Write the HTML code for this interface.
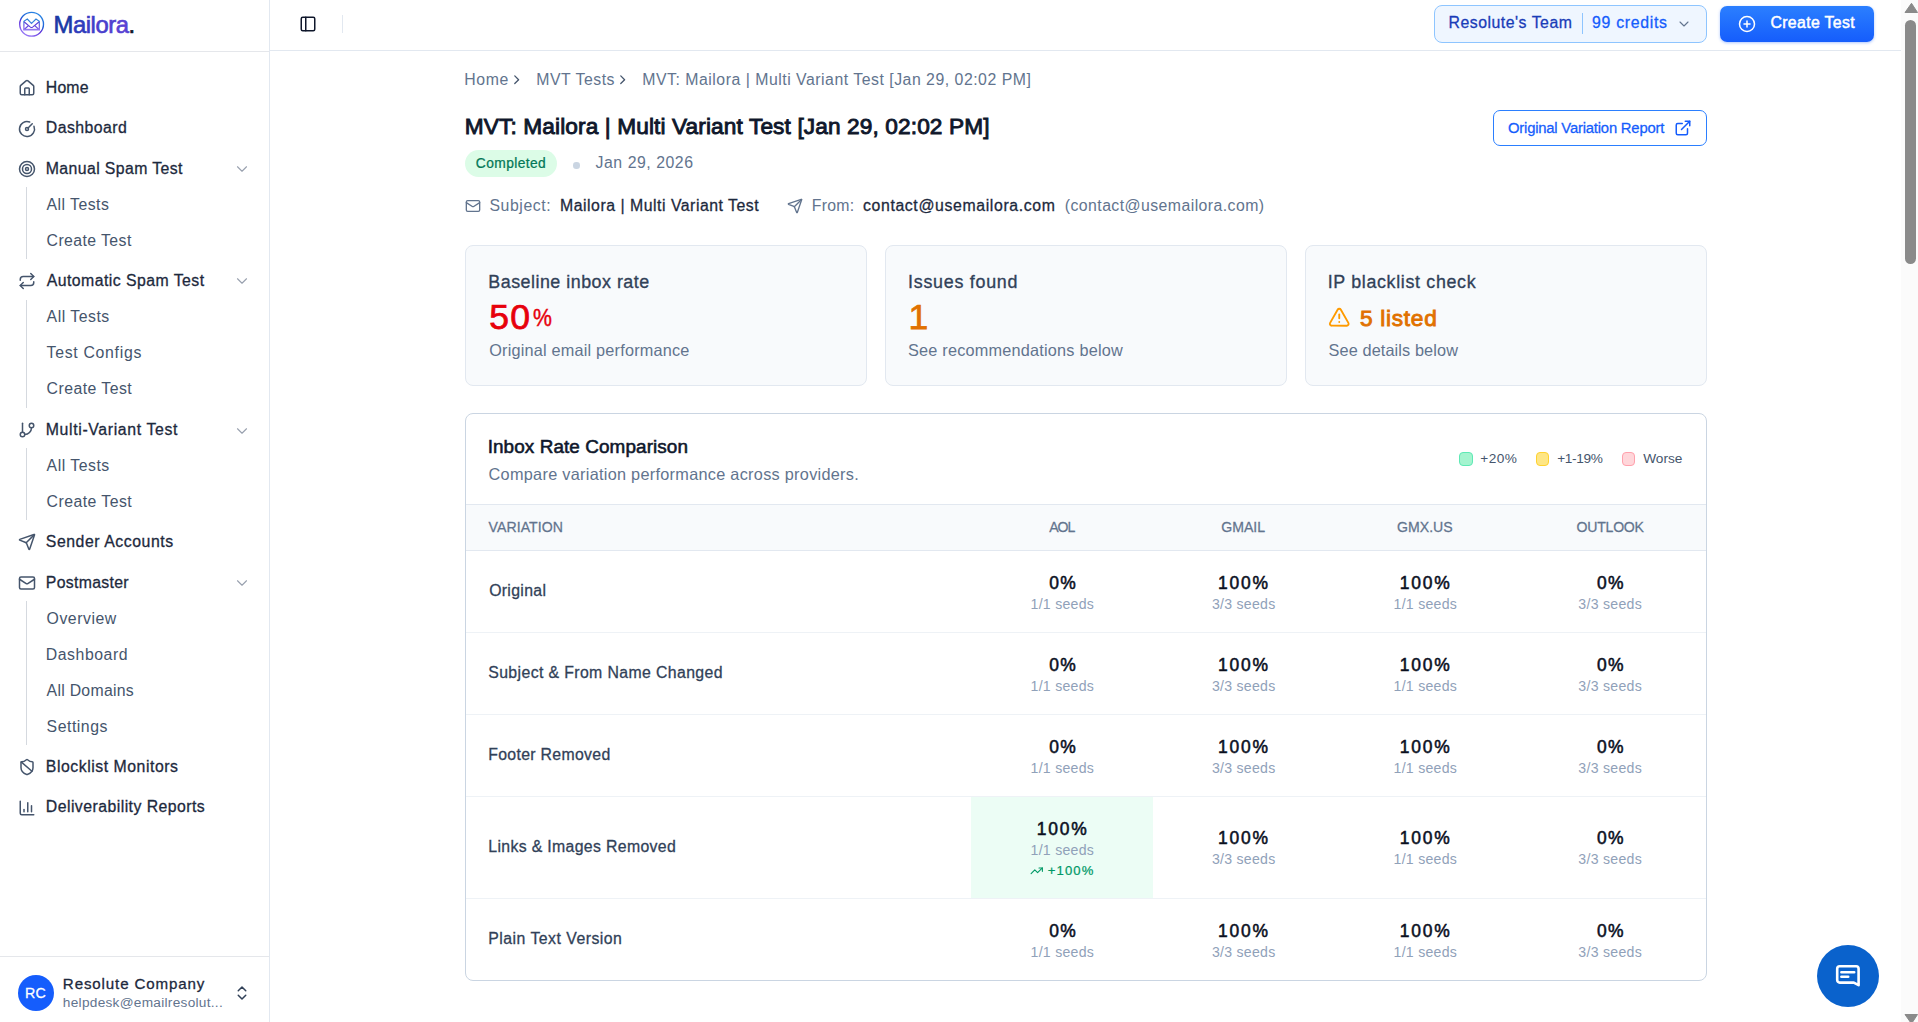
<!DOCTYPE html>
<html><head><meta charset="utf-8"><title>Mailora</title>
<style>
html,body{margin:0;padding:0;background:#fff;width:1918px;height:1022px;overflow:hidden;}
body{position:relative;font-family:"Liberation Sans",sans-serif;}
.t{position:absolute;white-space:nowrap;line-height:1;font-family:"Liberation Sans",sans-serif;}
.b{position:absolute;}
.ic{position:absolute;overflow:visible;}
</style></head><body>
<div class="b" style="left:269.00px;top:0.00px;width:1.00px;height:1022.00px;background:#e2e8f0"></div>
<div class="b" style="left:0.00px;top:51.00px;width:269.00px;height:1.00px;background:#e5e7eb"></div>
<div class="b" style="left:0.00px;top:956.00px;width:269.00px;height:1.00px;background:#e5e7eb"></div>
<div class="b" style="left:270.00px;top:50.00px;width:1631.00px;height:1.00px;background:#e2e8f0"></div>
<div class="b" style="left:342.00px;top:15.00px;width:1.00px;height:18.00px;background:#e2e8f0"></div>
<div class="b" style="left:26.00px;top:187.20px;width:1.00px;height:72.00px;background:#d5d9df"></div>
<div class="b" style="left:26.00px;top:299.60px;width:1.00px;height:108.00px;background:#d5d9df"></div>
<div class="b" style="left:26.00px;top:448.00px;width:1.00px;height:72.00px;background:#d5d9df"></div>
<div class="b" style="left:26.00px;top:601.00px;width:1.00px;height:144.00px;background:#d5d9df"></div>
<svg class="ic" style="left:16px;top:9px;width:32px;height:32px" viewBox="16 9 32 32">
<defs><linearGradient id="lg1" x1="0.8" y1="0" x2="0.3" y2="1"><stop offset="0" stop-color="#2b8be6"/><stop offset="0.45" stop-color="#1f5fd6"/><stop offset="0.6" stop-color="#5a2fd8"/><stop offset="1" stop-color="#9b7cf7"/></linearGradient>
<linearGradient id="lg2" x1="0" y1="0" x2="0" y2="1"><stop offset="0" stop-color="#2f7fd8"/><stop offset="0.35" stop-color="#3a86dc"/><stop offset="0.55" stop-color="#6a4fe0"/><stop offset="1" stop-color="#8a6cf0"/></linearGradient></defs>
<circle cx="31.6" cy="24.25" r="11.9" stroke="url(#lg1)" stroke-width="1.35" fill="none"/>
<g fill="none" stroke-width="1.15" stroke-linejoin="miter" stroke-linecap="round">
<path d="M23.9 29.6 V21.2 L27.3 19.1 L31.5 23.5 L36 19.1 L39.3 21.2 V29.6" stroke="url(#lg2)"/>
<path d="M24.3 22 L30.4 27.1 Q31.5 27.9 32.6 27.1 L38.9 22" stroke="#5b3fd8"/>
<path d="M24.5 29.2 L28.6 25.5 M38.6 29.2 L34.6 25.5" stroke="#6a4ae0"/>
</g>
<path d="M23.4 28.8 H39.9 V30.5 H23.4 Z" fill="#9479f0"/>
</svg>
<div class="t" id="logo" style="left:53.6px;top:12.77px;font-size:23.8px;font-weight:400;letter-spacing:-0.45px;-webkit-text-stroke:0.65px currentColor"><span style="color:#1b3aa6">M</span><span style="color:#2f3cbc">a</span><span style="color:#3b3cc4">i</span><span style="color:#423dc8">l</span><span style="color:#4a3ecd">o</span><span style="color:#5140d0">r</span><span style="color:#5842d3">a</span><span style="color:#0f172b">.</span></div>
<svg class="ic" style="left:18.00px;top:78.80px;width:18.00px;height:18.00px;" viewBox="0 0 24 24" fill="none" stroke="#45556c" stroke-width="2" stroke-linecap="round" stroke-linejoin="round"><path d="M15 21v-8a1 1 0 0 0-1-1h-4a1 1 0 0 0-1 1v8"/><path d="M3 10a2 2 0 0 1 .709-1.528l7-5.999a2 2 0 0 1 2.582 0l7 5.999A2 2 0 0 1 21 10v9a2 2 0 0 1-2 2H5a2 2 0 0 1-2-2z"/></svg>
<svg class="ic" style="left:18.00px;top:119.60px;width:18.00px;height:18.00px;" viewBox="0 0 24 24" fill="none" stroke="#45556c" stroke-width="2" stroke-linecap="round" stroke-linejoin="round"><path d="M15.6 2.7a10 10 0 1 0 5.7 5.7"/><circle cx="12" cy="12" r="2"/><path d="M13.4 10.6 19 5"/></svg>
<svg class="ic" style="left:18.00px;top:159.80px;width:18.00px;height:18.00px;" viewBox="0 0 24 24" fill="none" stroke="#45556c" stroke-width="2" stroke-linecap="round" stroke-linejoin="round"><circle cx="12" cy="12" r="10"/><circle cx="12" cy="12" r="6"/><circle cx="12" cy="12" r="2"/></svg>
<svg class="ic" style="left:18.00px;top:272.20px;width:18.00px;height:18.00px;" viewBox="0 0 24 24" fill="none" stroke="#45556c" stroke-width="2" stroke-linecap="round" stroke-linejoin="round"><path d="m17 2 4 4-4 4"/><path d="M3 11v-1a4 4 0 0 1 4-4h14"/><path d="m7 22-4-4 4-4"/><path d="M21 13v1a4 4 0 0 1-4 4H3"/></svg>
<svg class="ic" style="left:18.00px;top:421.30px;width:18.00px;height:18.00px;" viewBox="0 0 24 24" fill="none" stroke="#45556c" stroke-width="2" stroke-linecap="round" stroke-linejoin="round"><line x1="6" x2="6" y1="3" y2="15"/><circle cx="18" cy="6" r="3"/><circle cx="6" cy="18" r="3"/><path d="M18 9a9 9 0 0 1-9 9"/></svg>
<svg class="ic" style="left:18.00px;top:533.30px;width:18.00px;height:18.00px;" viewBox="0 0 24 24" fill="none" stroke="#45556c" stroke-width="2" stroke-linecap="round" stroke-linejoin="round"><path d="M14.536 21.686a.5.5 0 0 0 .937-.024l6.5-19a.496.496 0 0 0-.635-.635l-19 6.5a.5.5 0 0 0-.024.937l7.93 3.18a2 2 0 0 1 1.112 1.11z"/><path d="m21.854 2.147-10.94 10.939"/></svg>
<svg class="ic" style="left:18.00px;top:574.00px;width:18.00px;height:18.00px;" viewBox="0 0 24 24" fill="none" stroke="#45556c" stroke-width="2" stroke-linecap="round" stroke-linejoin="round"><rect width="20" height="16" x="2" y="4" rx="2"/><path d="m22 7-8.97 5.7a1.94 1.94 0 0 1-2.06 0L2 7"/></svg>
<svg class="ic" style="left:18.00px;top:757.90px;width:18.00px;height:18.00px;" viewBox="0 0 24 24" fill="none" stroke="#45556c" stroke-width="2" stroke-linecap="round" stroke-linejoin="round"><path d="M20 13c0 5-3.5 7.5-7.66 8.95a1 1 0 0 1-.67-.01C7.5 20.5 4 18 4 13V6a1 1 0 0 1 1-1c2 0 4.5-1.2 6.24-2.72a1.17 1.17 0 0 1 1.52 0C14.51 3.81 17 5 19 5a1 1 0 0 1 1 1z"/><path d="m4.243 5.21 14.39 12.472"/></svg>
<svg class="ic" style="left:18.00px;top:798.70px;width:18.00px;height:18.00px;" viewBox="0 0 24 24" fill="none" stroke="#45556c" stroke-width="2" stroke-linecap="round" stroke-linejoin="round"><path d="M3 3v16a2 2 0 0 0 2 2h16"/><path d="M18 17V9"/><path d="M13 17V5"/><path d="M8 17v-3"/></svg>
<svg class="ic" style="left:233.00px;top:160.00px;width:18.00px;height:18.00px;" viewBox="0 0 24 24" fill="none" stroke="#99a1af" stroke-width="1.5" stroke-linecap="round" stroke-linejoin="round"><path d="m6 9 6 6 6-6"/></svg>
<svg class="ic" style="left:233.00px;top:272.40px;width:18.00px;height:18.00px;" viewBox="0 0 24 24" fill="none" stroke="#99a1af" stroke-width="1.5" stroke-linecap="round" stroke-linejoin="round"><path d="m6 9 6 6 6-6"/></svg>
<svg class="ic" style="left:233.00px;top:421.60px;width:18.00px;height:18.00px;" viewBox="0 0 24 24" fill="none" stroke="#99a1af" stroke-width="1.5" stroke-linecap="round" stroke-linejoin="round"><path d="m6 9 6 6 6-6"/></svg>
<svg class="ic" style="left:233.00px;top:574.20px;width:18.00px;height:18.00px;" viewBox="0 0 24 24" fill="none" stroke="#99a1af" stroke-width="1.5" stroke-linecap="round" stroke-linejoin="round"><path d="m6 9 6 6 6-6"/></svg>
<div class="b" style="left:18.00px;top:975.00px;width:36.00px;height:36.00px;background:#155dfc;border-radius:50%"></div>
<svg class="ic" style="left:233.00px;top:984.20px;width:18.00px;height:18.00px;" viewBox="0 0 24 24" fill="none" stroke="#314158" stroke-width="2" stroke-linecap="round" stroke-linejoin="round"><path d="m7 15 5 5 5-5"/><path d="m7 9 5-5 5 5"/></svg>
<svg class="ic" style="left:299.00px;top:15.00px;width:18.00px;height:18.00px;" viewBox="0 0 24 24" fill="none" stroke="#0f172b" stroke-width="2" stroke-linecap="round" stroke-linejoin="round"><rect width="18" height="18" x="3" y="3" rx="2"/><path d="M9 3v18"/></svg>
<div class="b" style="left:1434.00px;top:5.00px;width:273.00px;height:38.00px;background:#eff6ff;border:1px solid #8ec5ff;border-radius:8px;box-sizing:border-box"></div>
<div class="b" style="left:1581.50px;top:13.00px;width:1.00px;height:21.00px;background:#8ec5ff"></div>
<svg class="ic" style="left:1675.80px;top:15.90px;width:16.00px;height:16.00px;" viewBox="0 0 24 24" fill="none" stroke="#62748e" stroke-width="1.6" stroke-linecap="round" stroke-linejoin="round"><path d="m6 9 6 6 6-6"/></svg>
<div class="b" style="left:1720.00px;top:6.00px;width:154.00px;height:36.00px;background:linear-gradient(180deg,#2b7fff,#155dfc);border-radius:7px;box-shadow:0 1px 3px rgba(21,93,252,0.35)"></div>
<svg class="ic" style="left:1738.10px;top:14.80px;width:18.00px;height:18.00px;" viewBox="0 0 24 24" fill="none" stroke="#ffffff" stroke-width="2" stroke-linecap="round" stroke-linejoin="round"><circle cx="12" cy="12" r="10"/><path d="M8 12h8"/><path d="M12 8v8"/></svg>
<svg class="ic" style="left:508.90px;top:72.10px;width:15.40px;height:15.40px;" viewBox="0 0 24 24" fill="none" stroke="#45556c" stroke-width="2" stroke-linecap="round" stroke-linejoin="round"><path d="m9 18 6-6-6-6"/></svg>
<svg class="ic" style="left:615.10px;top:72.10px;width:15.40px;height:15.40px;" viewBox="0 0 24 24" fill="none" stroke="#45556c" stroke-width="2" stroke-linecap="round" stroke-linejoin="round"><path d="m9 18 6-6-6-6"/></svg>
<div class="b" style="left:465.00px;top:150.00px;width:92.00px;height:27.00px;background:#dcfce7;border-radius:14px"></div>
<div class="b" style="left:573.00px;top:162.00px;width:6.50px;height:6.50px;background:#cad5e2;border-radius:50%"></div>
<svg class="ic" style="left:464.80px;top:197.80px;width:16.00px;height:16.00px;" viewBox="0 0 24 24" fill="none" stroke="#62748e" stroke-width="2" stroke-linecap="round" stroke-linejoin="round"><rect width="20" height="16" x="2" y="4" rx="2"/><path d="m22 7-8.97 5.7a1.94 1.94 0 0 1-2.06 0L2 7"/></svg>
<svg class="ic" style="left:787.20px;top:197.70px;width:16.00px;height:16.00px;" viewBox="0 0 24 24" fill="none" stroke="#62748e" stroke-width="2" stroke-linecap="round" stroke-linejoin="round"><path d="M14.536 21.686a.5.5 0 0 0 .937-.024l6.5-19a.496.496 0 0 0-.635-.635l-19 6.5a.5.5 0 0 0-.024.937l7.93 3.18a2 2 0 0 1 1.112 1.11z"/><path d="m21.854 2.147-10.94 10.939"/></svg>
<div class="b" style="left:1493.00px;top:110.00px;width:214.00px;height:36.00px;border:1px solid #2b7fff;border-radius:7px;box-sizing:border-box"></div>
<svg class="ic" style="left:1674.10px;top:118.50px;width:18.00px;height:18.00px;" viewBox="0 0 24 24" fill="none" stroke="#155dfc" stroke-width="2" stroke-linecap="round" stroke-linejoin="round"><path d="M15 3h6v6"/><path d="M10 14 21 3"/><path d="M18 13v6a2 2 0 0 1-2 2H5a2 2 0 0 1-2-2V8a2 2 0 0 1 2-2h6"/></svg>
<div class="b" style="left:465.00px;top:245.00px;width:402.00px;height:141.00px;background:#f8fafc;border:1px solid #e2e8f0;border-radius:8px;box-sizing:border-box"></div>
<div class="b" style="left:885.00px;top:245.00px;width:402.00px;height:141.00px;background:#f8fafc;border:1px solid #e2e8f0;border-radius:8px;box-sizing:border-box"></div>
<div class="b" style="left:1305.00px;top:245.00px;width:402.00px;height:141.00px;background:#f8fafc;border:1px solid #e2e8f0;border-radius:8px;box-sizing:border-box"></div>
<svg class="ic" style="left:1327.75px;top:305.95px;width:22.50px;height:22.50px;" viewBox="0 0 24 24" fill="none" stroke="#fe9a00" stroke-width="2" stroke-linecap="round" stroke-linejoin="round"><path d="m21.73 18-8-14a2 2 0 0 0-3.48 0l-8 14A2 2 0 0 0 4 21h16a2 2 0 0 0 1.73-3"/><path d="M12 9v4"/><path d="M12 17h.01"/></svg>
<div class="b" style="left:465.00px;top:413.00px;width:1242.00px;height:568.00px;background:#fff;border:1px solid #cad5e2;border-radius:8px;box-sizing:border-box"></div>
<div class="b" style="left:466.00px;top:504.00px;width:1240.00px;height:47.00px;background:#f8fafc;border-top:1px solid #e2e8f0;border-bottom:1px solid #e2e8f0;box-sizing:border-box"></div>
<div class="b" style="left:466.00px;top:632.00px;width:1240.00px;height:1.00px;background:#eef2f6"></div>
<div class="b" style="left:466.00px;top:714.00px;width:1240.00px;height:1.00px;background:#eef2f6"></div>
<div class="b" style="left:466.00px;top:796.00px;width:1240.00px;height:1.00px;background:#eef2f6"></div>
<div class="b" style="left:466.00px;top:898.00px;width:1240.00px;height:1.00px;background:#eef2f6"></div>
<div class="b" style="left:971.00px;top:797.00px;width:182.00px;height:101.00px;background:#ecfdf5"></div>
<div class="b" style="left:1459.00px;top:451.80px;width:13.60px;height:14.00px;background:#a4f4cf;border:1px solid #5ee9b5;border-radius:4px;box-sizing:border-box"></div>
<div class="b" style="left:1535.80px;top:451.80px;width:13.60px;height:14.00px;background:#fee685;border:1px solid #ffd230;border-radius:4px;box-sizing:border-box"></div>
<div class="b" style="left:1621.80px;top:451.80px;width:13.60px;height:14.00px;background:#ffd6da;border:1px solid #ffa1ad;border-radius:4px;box-sizing:border-box"></div>
<svg class="ic" style="left:1030.25px;top:863.55px;width:13.50px;height:13.50px;" viewBox="0 0 24 24" fill="none" stroke="#009966" stroke-width="2" stroke-linecap="round" stroke-linejoin="round"><polyline points="22 7 13.5 15.5 8.5 10.5 2 17"/><polyline points="16 7 22 7 22 13"/></svg>
<div class="b" style="left:1901.00px;top:0.00px;width:17.00px;height:1022.00px;background:#fbfbfb"></div>
<svg class="ic" style="left:1901px;top:0;width:17px;height:1022px" viewBox="0 0 17 1022"><path d="M4 12.5 L10.5 3.3 L16.5 12.5 Z" fill="#8a8a8a" stroke="#8a8a8a" stroke-width="1" stroke-linejoin="round"/><rect x="4" y="20" width="11" height="244" rx="5.5" fill="#8a8a8a"/><path d="M4 1014.5 L10.5 1023.7 L16.5 1014.5 Z" fill="#8a8a8a" stroke="#8a8a8a" stroke-width="1" stroke-linejoin="round"/></svg>
<div class="b" style="left:1817.00px;top:945.00px;width:62.00px;height:62.00px;background:#0a62cc;border-radius:50%"></div>
<svg class="ic" style="left:1832px;top:961px;width:32px;height:32px" viewBox="1832 961 32 32" fill="none" stroke="#fff" stroke-width="2.6" stroke-linecap="round" stroke-linejoin="round"><path d="M1839.7 966.3 H1856.1 A2.5 2.5 0 0 1 1858.6 968.8 V985.2 L1853.8 982.6 H1839.7 A2.5 2.5 0 0 1 1837.2 980.1 V968.8 A2.5 2.5 0 0 1 1839.7 966.3 Z"/><path d="M1841.4 972.3 H1854.2 M1841.4 976.7 H1848.2"/></svg>
<div class="t" id="nav0" style="left:45.80px;top:80.00px;font-size:15.84px;font-weight:400;color:#1d293d;letter-spacing:0.150px;-webkit-text-stroke:0.285px currentColor;">Home</div>
<div class="t" id="nav1" style="left:45.80px;top:120.00px;font-size:15.84px;font-weight:400;color:#1d293d;letter-spacing:0.450px;-webkit-text-stroke:0.285px currentColor;">Dashboard</div>
<div class="t" id="nav2" style="left:45.80px;top:161.00px;font-size:15.84px;font-weight:400;color:#1d293d;letter-spacing:0.390px;-webkit-text-stroke:0.285px currentColor;">Manual Spam Test</div>
<div class="t" id="nav3" style="left:46.70px;top:273.00px;font-size:15.84px;font-weight:400;color:#1d293d;letter-spacing:0.450px;-webkit-text-stroke:0.285px currentColor;">Automatic Spam Test</div>
<div class="t" id="nav4" style="left:45.80px;top:422.00px;font-size:15.84px;font-weight:400;color:#1d293d;letter-spacing:0.635px;-webkit-text-stroke:0.285px currentColor;">Multi-Variant Test</div>
<div class="t" id="nav5" style="left:45.80px;top:534.00px;font-size:15.84px;font-weight:400;color:#1d293d;letter-spacing:0.546px;-webkit-text-stroke:0.285px currentColor;">Sender Accounts</div>
<div class="t" id="nav6" style="left:45.80px;top:575.00px;font-size:15.84px;font-weight:400;color:#1d293d;letter-spacing:0.300px;-webkit-text-stroke:0.285px currentColor;">Postmaster</div>
<div class="t" id="nav7" style="left:45.80px;top:759.00px;font-size:15.84px;font-weight:400;color:#1d293d;letter-spacing:0.529px;-webkit-text-stroke:0.285px currentColor;">Blocklist Monitors</div>
<div class="t" id="nav8" style="left:45.80px;top:799.00px;font-size:15.84px;font-weight:400;color:#1d293d;letter-spacing:0.450px;-webkit-text-stroke:0.285px currentColor;">Deliverability Reports</div>
<div class="t" id="sub0" style="left:46.60px;top:197.00px;font-size:15.84px;font-weight:400;color:#45556c;letter-spacing:0.450px;">All Tests</div>
<div class="t" id="sub1" style="left:46.60px;top:233.00px;font-size:15.84px;font-weight:400;color:#45556c;letter-spacing:0.405px;">Create Test</div>
<div class="t" id="sub2" style="left:46.60px;top:309.00px;font-size:15.84px;font-weight:400;color:#45556c;letter-spacing:0.506px;">All Tests</div>
<div class="t" id="sub3" style="left:46.60px;top:345.00px;font-size:15.84px;font-weight:400;color:#45556c;letter-spacing:0.695px;">Test Configs</div>
<div class="t" id="sub4" style="left:46.60px;top:381.00px;font-size:15.84px;font-weight:400;color:#45556c;letter-spacing:0.450px;">Create Test</div>
<div class="t" id="sub5" style="left:46.60px;top:458.00px;font-size:15.84px;font-weight:400;color:#45556c;letter-spacing:0.506px;">All Tests</div>
<div class="t" id="sub6" style="left:46.60px;top:494.00px;font-size:15.84px;font-weight:400;color:#45556c;letter-spacing:0.450px;">Create Test</div>
<div class="t" id="sub7" style="left:46.60px;top:611.00px;font-size:15.84px;font-weight:400;color:#45556c;letter-spacing:0.514px;">Overview</div>
<div class="t" id="sub8" style="left:45.70px;top:647.00px;font-size:15.84px;font-weight:400;color:#45556c;letter-spacing:0.562px;">Dashboard</div>
<div class="t" id="sub9" style="left:46.60px;top:683.00px;font-size:15.84px;font-weight:400;color:#45556c;letter-spacing:0.270px;">All Domains</div>
<div class="t" id="sub10" style="left:46.60px;top:719.00px;font-size:15.84px;font-weight:400;color:#45556c;letter-spacing:0.514px;">Settings</div>
<div class="t" id="footname" style="left:62.85px;top:976.00px;font-size:15.12px;font-weight:400;color:#1d293d;letter-spacing:0.870px;-webkit-text-stroke:0.300px currentColor;">Resolute Company</div>
<div class="t" id="footmail" style="left:62.85px;top:996.00px;font-size:13.66px;font-weight:400;color:#62748e;letter-spacing:0.274px;">helpdesk@emailresolut...</div>
<div class="t" id="rc" style="left:24.90px;top:986.00px;font-size:14.24px;font-weight:400;color:#ffffff;letter-spacing:0.450px;-webkit-text-stroke:0.256px currentColor;">RC</div>
<div class="t" id="team" style="left:1448.50px;top:15.00px;font-size:15.84px;font-weight:400;color:#193cb8;letter-spacing:0.514px;-webkit-text-stroke:0.285px currentColor;">Resolute&#x27;s Team</div>
<div class="t" id="credits" style="left:1592.05px;top:15.00px;font-size:15.84px;font-weight:400;color:#155dfc;letter-spacing:0.700px;-webkit-text-stroke:0.285px currentColor;">99 credits</div>
<div class="t" id="createbtn" style="left:1770.40px;top:15.00px;font-size:15.84px;font-weight:400;color:#ffffff;letter-spacing:0.360px;-webkit-text-stroke:0.475px currentColor;">Create Test</div>
<div class="t" id="bc1" style="left:464.30px;top:72.00px;font-size:15.84px;font-weight:400;color:#62748e;letter-spacing:0.600px;">Home</div>
<div class="t" id="bc2" style="left:536.25px;top:72.00px;font-size:15.84px;font-weight:400;color:#62748e;letter-spacing:0.506px;">MVT Tests</div>
<div class="t" id="bc3" style="left:642.25px;top:72.00px;font-size:15.84px;font-weight:400;color:#62748e;letter-spacing:0.512px;">MVT: Mailora | Multi Variant Test [Jan 29, 02:02 PM]</div>
<div class="t" id="title" style="left:464.85px;top:115.00px;font-size:22.67px;font-weight:400;color:#0f172b;letter-spacing:0.115px;-webkit-text-stroke:0.907px currentColor;">MVT: Mailora | Multi Variant Test [Jan 29, 02:02 PM]</div>
<div class="t" id="completed" style="left:475.85px;top:157.00px;font-size:13.81px;font-weight:400;color:#047857;letter-spacing:0.394px;-webkit-text-stroke:0.249px currentColor;">Completed</div>
<div class="t" id="date" style="left:595.60px;top:155.00px;font-size:15.84px;font-weight:400;color:#62748e;letter-spacing:0.532px;">Jan 29, 2026</div>
<div class="t" id="subjlbl" style="left:489.45px;top:198.00px;font-size:15.84px;font-weight:400;color:#62748e;letter-spacing:0.579px;">Subject:</div>
<div class="t" id="subj" style="left:560.00px;top:198.00px;font-size:15.84px;font-weight:400;color:#1d293d;letter-spacing:0.517px;-webkit-text-stroke:0.285px currentColor;">Mailora | Multi Variant Test</div>
<div class="t" id="fromlbl" style="left:811.85px;top:198.00px;font-size:15.84px;font-weight:400;color:#62748e;letter-spacing:0.225px;">From:</div>
<div class="t" id="from" style="left:863.00px;top:198.00px;font-size:15.84px;font-weight:400;color:#1d293d;letter-spacing:0.621px;-webkit-text-stroke:0.285px currentColor;">contact@usemailora.com</div>
<div class="t" id="from2" style="left:1064.80px;top:198.00px;font-size:15.84px;font-weight:400;color:#62748e;letter-spacing:0.430px;">(contact@usemailora.com)</div>
<div class="t" id="ovr" style="left:1508.00px;top:121.00px;font-size:14.83px;font-weight:400;color:#155dfc;letter-spacing:-0.206px;-webkit-text-stroke:0.267px currentColor;">Original Variation Report</div>
<div class="t" id="c1t" style="left:488.30px;top:274.00px;font-size:17.88px;font-weight:400;color:#314158;letter-spacing:0.500px;-webkit-text-stroke:0.322px currentColor;">Baseline inbox rate</div>
<div class="t" id="c1v" style="left:489.25px;top:300.00px;font-size:35.47px;font-weight:400;color:#e7000b;letter-spacing:1.350px;-webkit-text-stroke:0.750px currentColor;">50</div>
<div class="t" id="c1p" style="left:533.00px;top:306.00px;font-size:24.13px;font-weight:400;color:#e7000b;letter-spacing:0.000px;-webkit-text-stroke:0.434px currentColor;transform:scaleX(0.88);transform-origin:0 0;">%</div>
<div class="t" id="c1s" style="left:489.20px;top:342.00px;font-size:16.28px;font-weight:400;color:#62748e;letter-spacing:0.198px;">Original email performance</div>
<div class="t" id="c2t" style="left:908.05px;top:274.00px;font-size:17.88px;font-weight:400;color:#314158;letter-spacing:0.736px;-webkit-text-stroke:0.322px currentColor;">Issues found</div>
<div class="t" id="c2v" style="left:908.40px;top:300.00px;font-size:35.47px;font-weight:400;color:#e17100;letter-spacing:0.000px;-webkit-text-stroke:0.750px currentColor;">1</div>
<div class="t" id="c2s" style="left:908.05px;top:342.00px;font-size:16.28px;font-weight:400;color:#62748e;letter-spacing:0.206px;">See recommendations below</div>
<div class="t" id="c3t" style="left:1327.70px;top:274.00px;font-size:17.88px;font-weight:400;color:#314158;letter-spacing:0.662px;-webkit-text-stroke:0.322px currentColor;">IP blacklist check</div>
<div class="t" id="c3v" style="left:1360.00px;top:307.00px;font-size:22.67px;font-weight:400;color:#e17100;letter-spacing:0.707px;-webkit-text-stroke:0.907px currentColor;">5 listed</div>
<div class="t" id="c3s" style="left:1328.60px;top:342.00px;font-size:16.28px;font-weight:400;color:#62748e;letter-spacing:0.113px;">See details below</div>
<div class="t" id="tt" style="left:487.70px;top:438.00px;font-size:18.90px;font-weight:400;color:#0f172b;letter-spacing:0.090px;-webkit-text-stroke:0.567px currentColor;">Inbox Rate Comparison</div>
<div class="t" id="ts" style="left:488.60px;top:466.00px;font-size:16.28px;font-weight:400;color:#62748e;letter-spacing:0.284px;">Compare variation performance across providers.</div>
<div class="t" id="lg1" style="left:1480.25px;top:452.00px;font-size:13.66px;font-weight:400;color:#45556c;letter-spacing:0.450px;">+20%</div>
<div class="t" id="lg2" style="left:1557.25px;top:452.00px;font-size:13.66px;font-weight:400;color:#45556c;letter-spacing:-0.360px;">+1-19%</div>
<div class="t" id="lg3" style="left:1643.15px;top:452.00px;font-size:13.66px;font-weight:400;color:#45556c;letter-spacing:-0.000px;">Worse</div>
<div class="t" id="h0" style="left:488.60px;top:520.00px;font-size:14.10px;font-weight:400;color:#62748e;letter-spacing:0.056px;-webkit-text-stroke:0.254px currentColor;">VARIATION</div>
<div class="t" id="h1" style="left:1049.35px;top:520.00px;font-size:14.10px;font-weight:400;color:#62748e;letter-spacing:-1.125px;-webkit-text-stroke:0.254px currentColor;">AOL</div>
<div class="t" id="h2" style="left:1221.25px;top:520.00px;font-size:14.10px;font-weight:400;color:#62748e;letter-spacing:-0.000px;-webkit-text-stroke:0.254px currentColor;">GMAIL</div>
<div class="t" id="h3" style="left:1397.05px;top:520.00px;font-size:14.10px;font-weight:400;color:#62748e;letter-spacing:0.000px;-webkit-text-stroke:0.254px currentColor;">GMX.US</div>
<div class="t" id="h4" style="left:1576.45px;top:520.00px;font-size:14.10px;font-weight:400;color:#62748e;letter-spacing:-0.225px;-webkit-text-stroke:0.254px currentColor;">OUTLOOK</div>
<div class="t" id="rn0" style="left:489.15px;top:583.00px;font-size:15.84px;font-weight:400;color:#314158;letter-spacing:0.321px;-webkit-text-stroke:0.285px currentColor;">Original</div>
<div class="t" id="rn1" style="left:488.25px;top:665.00px;font-size:15.84px;font-weight:400;color:#314158;letter-spacing:0.381px;-webkit-text-stroke:0.285px currentColor;">Subject &amp; From Name Changed</div>
<div class="t" id="rn2" style="left:488.25px;top:747.00px;font-size:15.84px;font-weight:400;color:#314158;letter-spacing:0.312px;-webkit-text-stroke:0.285px currentColor;">Footer Removed</div>
<div class="t" id="rn3" style="left:488.25px;top:839.00px;font-size:15.84px;font-weight:400;color:#314158;letter-spacing:0.343px;-webkit-text-stroke:0.285px currentColor;">Links &amp; Images Removed</div>
<div class="t" id="rn4" style="left:488.25px;top:931.00px;font-size:15.84px;font-weight:400;color:#314158;letter-spacing:0.476px;-webkit-text-stroke:0.285px currentColor;">Plain Text Version</div>
<div class="t" id="v00" style="left:1049.22px;top:575.00px;font-size:17.44px;font-weight:400;color:#0a0f1e;letter-spacing:1.350px;-webkit-text-stroke:0.523px currentColor;">0%</div>
<div class="t" id="s00" style="left:1030.53px;top:597.00px;font-size:14.10px;font-weight:400;color:#90a1b9;letter-spacing:0.281px;">1/1 seeds</div>
<div class="t" id="v01" style="left:1218.05px;top:575.00px;font-size:17.44px;font-weight:400;color:#0a0f1e;letter-spacing:1.800px;-webkit-text-stroke:0.523px currentColor;">100%</div>
<div class="t" id="s01" style="left:1211.92px;top:597.00px;font-size:14.10px;font-weight:400;color:#90a1b9;letter-spacing:0.281px;">3/3 seeds</div>
<div class="t" id="v02" style="left:1399.65px;top:575.00px;font-size:17.44px;font-weight:400;color:#0a0f1e;letter-spacing:1.800px;-webkit-text-stroke:0.523px currentColor;">100%</div>
<div class="t" id="s02" style="left:1393.53px;top:597.00px;font-size:14.10px;font-weight:400;color:#90a1b9;letter-spacing:0.281px;">1/1 seeds</div>
<div class="t" id="v03" style="left:1597.07px;top:575.00px;font-size:17.44px;font-weight:400;color:#0a0f1e;letter-spacing:1.350px;-webkit-text-stroke:0.523px currentColor;">0%</div>
<div class="t" id="s03" style="left:1578.37px;top:597.00px;font-size:14.10px;font-weight:400;color:#90a1b9;letter-spacing:0.281px;">3/3 seeds</div>
<div class="t" id="v10" style="left:1049.22px;top:657.00px;font-size:17.44px;font-weight:400;color:#0a0f1e;letter-spacing:1.350px;-webkit-text-stroke:0.523px currentColor;">0%</div>
<div class="t" id="s10" style="left:1030.53px;top:679.00px;font-size:14.10px;font-weight:400;color:#90a1b9;letter-spacing:0.281px;">1/1 seeds</div>
<div class="t" id="v11" style="left:1218.05px;top:657.00px;font-size:17.44px;font-weight:400;color:#0a0f1e;letter-spacing:1.800px;-webkit-text-stroke:0.523px currentColor;">100%</div>
<div class="t" id="s11" style="left:1211.92px;top:679.00px;font-size:14.10px;font-weight:400;color:#90a1b9;letter-spacing:0.281px;">3/3 seeds</div>
<div class="t" id="v12" style="left:1399.65px;top:657.00px;font-size:17.44px;font-weight:400;color:#0a0f1e;letter-spacing:1.800px;-webkit-text-stroke:0.523px currentColor;">100%</div>
<div class="t" id="s12" style="left:1393.53px;top:679.00px;font-size:14.10px;font-weight:400;color:#90a1b9;letter-spacing:0.281px;">1/1 seeds</div>
<div class="t" id="v13" style="left:1597.07px;top:657.00px;font-size:17.44px;font-weight:400;color:#0a0f1e;letter-spacing:1.350px;-webkit-text-stroke:0.523px currentColor;">0%</div>
<div class="t" id="s13" style="left:1578.37px;top:679.00px;font-size:14.10px;font-weight:400;color:#90a1b9;letter-spacing:0.281px;">3/3 seeds</div>
<div class="t" id="v20" style="left:1049.22px;top:739.00px;font-size:17.44px;font-weight:400;color:#0a0f1e;letter-spacing:1.350px;-webkit-text-stroke:0.523px currentColor;">0%</div>
<div class="t" id="s20" style="left:1030.53px;top:761.00px;font-size:14.10px;font-weight:400;color:#90a1b9;letter-spacing:0.281px;">1/1 seeds</div>
<div class="t" id="v21" style="left:1218.05px;top:739.00px;font-size:17.44px;font-weight:400;color:#0a0f1e;letter-spacing:1.800px;-webkit-text-stroke:0.523px currentColor;">100%</div>
<div class="t" id="s21" style="left:1211.92px;top:761.00px;font-size:14.10px;font-weight:400;color:#90a1b9;letter-spacing:0.281px;">3/3 seeds</div>
<div class="t" id="v22" style="left:1399.65px;top:739.00px;font-size:17.44px;font-weight:400;color:#0a0f1e;letter-spacing:1.800px;-webkit-text-stroke:0.523px currentColor;">100%</div>
<div class="t" id="s22" style="left:1393.53px;top:761.00px;font-size:14.10px;font-weight:400;color:#90a1b9;letter-spacing:0.281px;">1/1 seeds</div>
<div class="t" id="v23" style="left:1597.07px;top:739.00px;font-size:17.44px;font-weight:400;color:#0a0f1e;letter-spacing:1.350px;-webkit-text-stroke:0.523px currentColor;">0%</div>
<div class="t" id="s23" style="left:1578.37px;top:761.00px;font-size:14.10px;font-weight:400;color:#90a1b9;letter-spacing:0.281px;">3/3 seeds</div>
<div class="t" id="v30" style="left:1036.65px;top:821.00px;font-size:17.44px;font-weight:400;color:#0a0f1e;letter-spacing:1.800px;-webkit-text-stroke:0.523px currentColor;">100%</div>
<div class="t" id="s30" style="left:1030.53px;top:843.00px;font-size:14.10px;font-weight:400;color:#90a1b9;letter-spacing:0.281px;">1/1 seeds</div>
<div class="t" id="v31" style="left:1218.05px;top:830.00px;font-size:17.44px;font-weight:400;color:#0a0f1e;letter-spacing:1.800px;-webkit-text-stroke:0.523px currentColor;">100%</div>
<div class="t" id="s31" style="left:1211.92px;top:852.00px;font-size:14.10px;font-weight:400;color:#90a1b9;letter-spacing:0.281px;">3/3 seeds</div>
<div class="t" id="v32" style="left:1399.65px;top:830.00px;font-size:17.44px;font-weight:400;color:#0a0f1e;letter-spacing:1.800px;-webkit-text-stroke:0.523px currentColor;">100%</div>
<div class="t" id="s32" style="left:1393.53px;top:852.00px;font-size:14.10px;font-weight:400;color:#90a1b9;letter-spacing:0.281px;">1/1 seeds</div>
<div class="t" id="v33" style="left:1597.07px;top:830.00px;font-size:17.44px;font-weight:400;color:#0a0f1e;letter-spacing:1.350px;-webkit-text-stroke:0.523px currentColor;">0%</div>
<div class="t" id="s33" style="left:1578.37px;top:852.00px;font-size:14.10px;font-weight:400;color:#90a1b9;letter-spacing:0.281px;">3/3 seeds</div>
<div class="t" id="v40" style="left:1049.22px;top:923.00px;font-size:17.44px;font-weight:400;color:#0a0f1e;letter-spacing:1.350px;-webkit-text-stroke:0.523px currentColor;">0%</div>
<div class="t" id="s40" style="left:1030.53px;top:945.00px;font-size:14.10px;font-weight:400;color:#90a1b9;letter-spacing:0.281px;">1/1 seeds</div>
<div class="t" id="v41" style="left:1218.05px;top:923.00px;font-size:17.44px;font-weight:400;color:#0a0f1e;letter-spacing:1.800px;-webkit-text-stroke:0.523px currentColor;">100%</div>
<div class="t" id="s41" style="left:1211.92px;top:945.00px;font-size:14.10px;font-weight:400;color:#90a1b9;letter-spacing:0.281px;">3/3 seeds</div>
<div class="t" id="v42" style="left:1399.65px;top:923.00px;font-size:17.44px;font-weight:400;color:#0a0f1e;letter-spacing:1.800px;-webkit-text-stroke:0.523px currentColor;">100%</div>
<div class="t" id="s42" style="left:1393.53px;top:945.00px;font-size:14.10px;font-weight:400;color:#90a1b9;letter-spacing:0.281px;">1/1 seeds</div>
<div class="t" id="v43" style="left:1597.07px;top:923.00px;font-size:17.44px;font-weight:400;color:#0a0f1e;letter-spacing:1.350px;-webkit-text-stroke:0.523px currentColor;">0%</div>
<div class="t" id="s43" style="left:1578.37px;top:945.00px;font-size:14.10px;font-weight:400;color:#90a1b9;letter-spacing:0.281px;">3/3 seeds</div>
<div class="t" id="plus" style="left:1047.75px;top:864.00px;font-size:13.08px;font-weight:400;color:#009966;letter-spacing:1.125px;-webkit-text-stroke:0.235px currentColor;">+100%</div>
</body></html>
